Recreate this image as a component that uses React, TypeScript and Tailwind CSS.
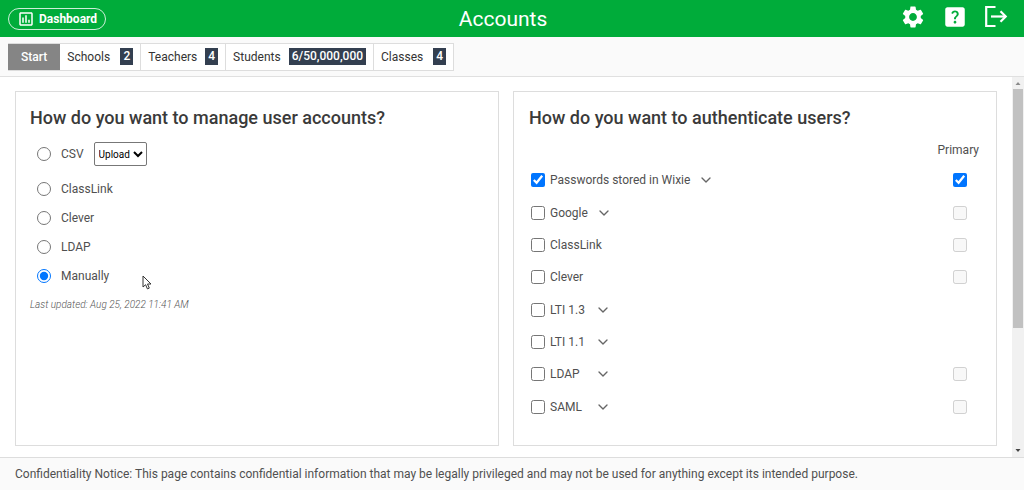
import React, { useState } from 'react';
import { ChevronDown } from 'lucide-react';
import { MdHelpCenter, MdOutlineAssessment, MdSettings } from 'react-icons/md';
import clsx from 'clsx';

const tabs = [
    { label: 'Start' },
    { label: 'Schools', count: '2' },
    { label: 'Teachers', count: '4' },
    { label: 'Students', count: '6/50,000,000' },
    { label: 'Classes', count: '4' },
];

const sources = ['CSV', 'ClassLink', 'Clever', 'LDAP', 'Manually'];

const methods = [
    { label: 'Passwords stored in Wixie', expands: true, primary: true },
    { label: 'Google', expands: true, primary: true },
    { label: 'ClassLink', expands: false, primary: true },
    { label: 'Clever', expands: false, primary: true },
    { label: 'LTI 1.3', expands: true, primary: false },
    { label: 'LTI 1.1', expands: true, primary: false },
    { label: 'LDAP', expands: true, primary: true },
    { label: 'SAML', expands: true, primary: true },
];

const SignOutIcon = () => (
    <svg width="24" height="24" viewBox="0 0 24 24" fill="none" stroke="currentColor" strokeWidth="2.2">
        <path d="M11.5 2H2.2v19h9.3" />
        <path d="M7 11.5h14.5" />
        <path d="M16.5 6.3l5.2 5.2-5.2 5.2" />
    </svg>
);

const Pointer = () => (
    <svg className="absolute left-[105px] top-3.5" width="10" height="15" viewBox="0 0 10 15">
        <path d="M1 1v11l2.6-2.3 1.8 4.2 1.9-.8-1.8-4.1H9z" fill="#fff" stroke="#333" strokeWidth="1" />
    </svg>
);

const Header = () => (
    <header className="flex h-[37px] shrink-0 items-center justify-between bg-[#00ac3a] px-2 text-white">
        <button className="flex h-[22px] items-center gap-1 rounded-full border border-white/80 px-2 text-xs font-bold">
            <MdOutlineAssessment size={18} />
            Dashboard
        </button>
        <h1 className="text-[21px] leading-7">Accounts</h1>
        <div className="flex items-center gap-4 pr-2 pb-[3px]">
            <button aria-label="Settings"><MdSettings size={26} /></button>
            <button aria-label="Help"><MdHelpCenter size={26} /></button>
            <button aria-label="Sign out"><SignOutIcon /></button>
        </div>
    </header>
);

const Tabs = () => {
    const [active, setActive] = useState('Start');

    return (
        <nav className="flex h-10 shrink-0 items-center border-b border-[#e0e0e0] bg-[#fafafa] px-2">
            <div className="flex h-7 border border-l-0 border-[#ddd] bg-white">
                {tabs.map(({ label, count }, i) => (
                    <button
                        key={label}
                        onClick={() => setActive(label)}
                        className={clsx(
                            'flex items-center justify-between gap-2 text-xs',
                            i > 1 && 'border-l border-[#ddd]',
                            count ? 'min-w-20 px-[7px]' : 'px-[13px]',
                            active === label ? 'bg-[#858585] font-medium text-white' : 'text-[#333]',
                        )}
                    >
                        {label}
                        {count && (
                            <span className="bg-[#333f50] px-[3px] text-xs leading-[17px] font-medium text-white">{count}</span>
                        )}
                    </button>
                ))}
            </div>
        </nav>
    );
};

const ManagePanel = () => {
    const [source, setSource] = useState('Manually');

    return (
        <section className="border border-[#ddd] px-3.5 pt-3.5">
            <h2 className="text-lg leading-6 font-medium text-[#3a3a3a]">How do you want to manage user accounts?</h2>
            <div className="pt-2 pl-[7px]">
                {sources.map((name) => (
                    <div key={name} className={clsx('relative flex items-center', name === 'CSV' ? 'mb-1 h-8' : 'h-[29px]')}>
                        <label className="flex items-center gap-2.5">
                            <input
                                type="radio"
                                name="source"
                                className="size-3.5"
                                checked={source === name}
                                onChange={() => setSource(name)}
                            />
                            {name}
                        </label>
                        {name === 'CSV' && (
                            <select aria-label="CSV action" className="ml-2.5 h-6 w-[53px] rounded-xs border border-[#777] bg-white text-[10px] text-black">
                                <option>Upload</option>
                                <option>Download</option>
                            </select>
                        )}
                        {name === 'Manually' && <Pointer />}
                    </div>
                ))}
            </div>
            <p className="pt-[7px] text-[10px] leading-4 font-light text-[#555] italic">Last updated: Aug 25, 2022 11:41 AM</p>
        </section>
    );
};

const AuthPanel = () => {
    const [enabled, setEnabled] = useState(['Passwords stored in Wixie']);

    const toggle = (name: string) =>
        setEnabled(enabled.includes(name) ? enabled.filter((n) => n !== name) : [...enabled, name]);

    return (
        <section className="flex flex-col border border-[#ddd] px-[15px] pt-3.5 pb-[22px]">
            <h2 className="text-lg leading-6 font-medium text-[#3a3a3a]">How do you want to authenticate users?</h2>
            <div className="flex justify-end pt-3 pr-0.5 leading-4">Primary</div>
            <div className="flex flex-1 flex-col pt-1.5 pr-3.5 pl-0.5">
                {methods.map(({ label, expands, primary }) => (
                    <div key={label} className="flex flex-1 items-center gap-2">
                        <label className="flex min-w-14 items-center gap-[5px]">
                            <input
                                type="checkbox"
                                className="size-3.5"
                                checked={enabled.includes(label)}
                                onChange={() => toggle(label)}
                            />
                            {label}
                        </label>
                        {expands && (
                            <button aria-label={`${label} options`} className="text-[#666]"><ChevronDown size={16} /></button>
                        )}
                        {primary && (
                            <input
                                type="checkbox"
                                aria-label={`${label} primary`}
                                className="ml-auto size-3.5"
                                checked={enabled.includes(label)}
                                disabled={!enabled.includes(label)}
                                readOnly
                            />
                        )}
                    </div>
                ))}
            </div>
        </section>
    );
};

const ScrollRail = () => (
    <div className="flex w-3 shrink-0 flex-col items-center bg-[#f1f1f1]">
        <svg width="12" height="12" viewBox="0 0 12 12"><path d="M3.5 8L6 5l2.5 3z" fill="#8a8a8a" /></svg>
        <div className="h-[63%] w-2.5 bg-[#c1c1c1]" />
        <svg className="mt-auto" width="12" height="12" viewBox="0 0 12 12"><path d="M3.5 4L6 7l2.5-3z" fill="#444" /></svg>
    </div>
);

const App: React.FC = () => (
    <div className="flex h-screen flex-col bg-white font-[Roboto,sans-serif] text-xs text-[#505050]">
        <Header />
        <Tabs />
        <div className="flex min-h-0 flex-1">
            <main className="grid flex-1 grid-cols-2 gap-3.5 px-[15px] pt-3.5 pb-[11px]">
                <ManagePanel />
                <AuthPanel />
            </main>
            <ScrollRail />
        </div>
        <footer className="h-[33px] shrink-0 border-t border-[#ddd] bg-[#fafafa] px-[15px] leading-8">
            Confidentiality Notice: This page contains confidential information that may be legally privileged and may not be used for anything except its intended purpose.
        </footer>
    </div>
);

export default App;
